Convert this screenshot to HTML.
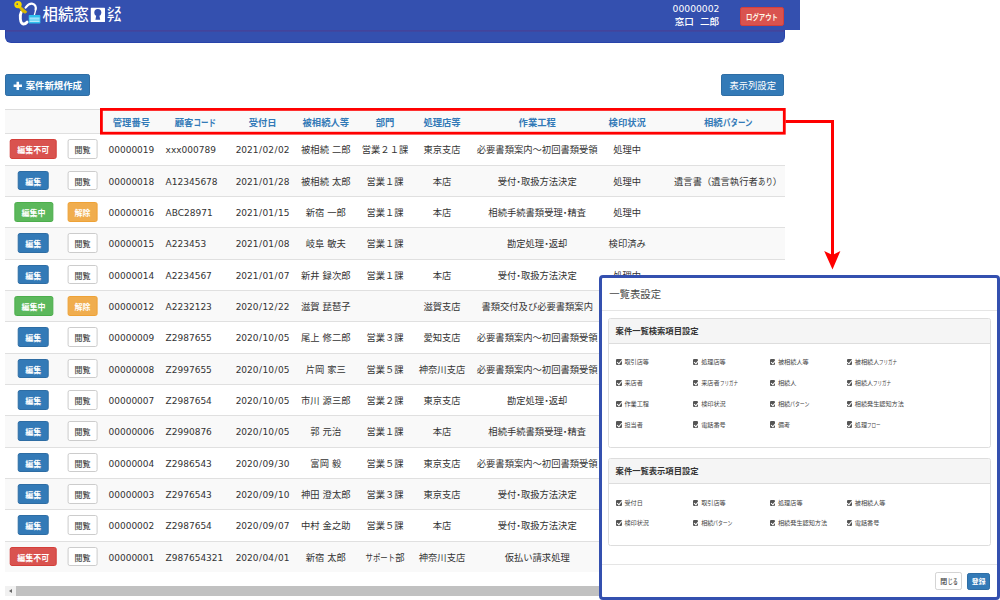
<!DOCTYPE html>
<html lang="ja">
<head>
<meta charset="utf-8">
<title>相続窓口システム</title>
<style>
*{box-sizing:border-box;margin:0;padding:0}
html,body{width:1000px;height:600px;overflow:hidden;background:#fff}
body{position:relative;font-family:"DejaVu Sans","Noto Sans CJK JP",sans-serif;font-size:9.3px;color:#333}
.k{display:inline-block;transform:scaleX(var(--s,.8));transform-origin:0 50%;margin-right:calc(var(--n) * (var(--s,.8) - 1) * 1em);white-space:nowrap}
/* header */
.hd{position:absolute;left:0;top:0;width:800px;height:30.3px;background:#3450af}
.sub{position:absolute;left:5px;top:30px;width:779.5px;height:13px;background:linear-gradient(#3c4aa6 0,#43449c .5px,#43449c 1.3px,#3450af 2px);border-radius:0 0 6px 6px;border:.7px solid #2843aa;border-top:0}
.logo{position:absolute;left:0;top:0}
.brand{position:absolute;left:42.6px;top:4.4px;font-size:15.4px;line-height:22px;color:#fff;font-weight:500;letter-spacing:.1px;white-space:nowrap}
.sys{position:absolute;left:107px;top:6.2px;font-size:7.4px;line-height:7.25px;color:#fff;font-weight:900;white-space:nowrap;transform:scaleY(1.12);transform-origin:0 0;letter-spacing:-.3px}
.user{position:absolute;left:646px;width:100px;text-align:center;color:#fff;white-space:nowrap}
.u1{top:2.7px;font-size:9.2px;line-height:11px}
.u2{top:16px;left:647px;font-size:9.6px;line-height:12px;word-spacing:3px;font-weight:500}
.btn{display:inline-block;font-weight:700;text-align:center;white-space:nowrap;border-radius:2.2px;border:.7px solid transparent;color:#fff}
.logout{position:absolute;left:740.4px;top:6.8px;width:43.4px;height:19.6px;line-height:20px;font-size:8px;background:#d9534f;border-color:#d43f3a;color:#fff7e8}
.new{position:absolute;left:5px;top:73.6px;width:84.6px;height:22.4px;line-height:21px;font-size:9.4px;background:#337ab7;border-color:#2e6da4}
.cols{position:absolute;left:721px;top:73.6px;width:63.4px;height:22.4px;line-height:21px;font-size:9.3px;background:#337ab7;border-color:#2e6da4;font-weight:400}
/* table */
.tbl{position:absolute;left:5px;top:108.5px;width:779.5px;height:463px}
.hr{position:absolute;left:0;top:0;width:100%;height:25.2px;background:#f9f9f9;border-top:.7px solid #ddd;border-bottom:1.3px solid #ddd;line-height:25.5px}
.tr{position:absolute;left:0;width:100%;height:31.33px;border-top:.7px solid #e0e0e0;line-height:31.6px}
.tr.odd{background:#f9f9f9}
.c{position:absolute;top:0;transform:translateX(-50%);white-space:nowrap}
.l{position:absolute;top:0;white-space:nowrap}
.n{font-size:9px;margin-top:1.1px}
.s{font-style:normal;margin:0 .5px}
.th{color:#337ab7;font-weight:700;font-size:9.3px}
.tr .btn{height:19.8px;line-height:21.2px;font-size:8px;vertical-align:middle;position:relative;top:-1.7px}
.bd{width:46.6px;background:#d9534f;border-color:#d43f3a}
.bp{width:30.6px;background:#337ab7;border-color:#2e6da4}
.bs{width:38.8px;margin-left:.5px;background:#5cb85c;border-color:#4cae4c}
.bw{width:30.8px;background:#fff;border-color:#ccc!important;color:#444!important;font-weight:500}
.bo{width:30.8px;background:#f0ad4e;border-color:#eea236}
/* scrollbar */
.sb{position:absolute;left:5px;top:585.8px;width:780px;height:9.8px;background:#f1f1f1}
.sb i{position:absolute;left:11.2px;top:.6px;width:700px;height:9.2px;background:#c1c1c1}
.sb b{position:absolute;left:3.8px;top:2.8px;width:0;height:0;border:2.3px solid transparent;border-left:0;border-right:3px solid #666}
/* modal */
.modal{position:absolute;left:599px;top:275px;width:401px;height:325px;background:#fff;border:3px solid #3450af;border-radius:4px}
.mt{position:absolute;left:7.2px;top:7.6px;font-size:10.4px;line-height:16px;color:#4a4a4a;font-weight:400;white-space:nowrap}
.hl{position:absolute;left:0;width:100%;height:.8px;background:#e5e5e5}
.panel{position:absolute;left:6.4px;width:382.6px;border:.7px solid #ddd;border-radius:2.5px;background:#fff}
.ph{height:25px;line-height:24px;background:#f5f5f5;border-bottom:.7px solid #ddd;font-size:8.3px;font-weight:700;color:#333;padding-left:6.2px;border-radius:2px 2px 0 0}
.pb{position:relative}
.cb{position:absolute;font-size:6.15px;line-height:10px;color:#444;white-space:nowrap;padding-left:8.4px;margin-left:-.8px}
.cb i{position:absolute;left:.2px;top:1.5px;width:5.5px;height:6.5px;background:#555;border-radius:1.1px}
.cb i:after{content:"";position:absolute;left:1.9px;top:.5px;width:1.8px;height:3.9px;border:solid #fff;border-width:0 1px 1px 0;transform:rotate(40deg)}
.mclose{position:absolute;left:333.2px;top:294.3px;width:27.3px;height:18.2px;line-height:18.8px;font-size:6.9px;background:#fff;border-color:#d4d4d4;color:#444;font-weight:500;text-indent:1px}
.mreg{position:absolute;left:365px;top:294.5px;width:23.3px;height:17.8px;line-height:16.6px;font-size:6.8px;background:#337ab7;border-color:#2e6da4}
.ov{position:absolute;left:0;top:0;pointer-events:none}
</style>
</head>
<body>
<div class="hd"></div>
<div class="sub"></div>
<svg class="logo" width="130" height="31" viewBox="0 0 130 31">
  <!-- ring -->
  <path d="M21.3 12 C19.6 15 19.9 23.6 23.2 24 C25 24.1 26.2 23.2 27.2 22" fill="none" stroke="#fff" stroke-width="2.8" stroke-linecap="round"/>
  <path d="M25.6 7.6 C27.6 5 30.4 3.4 32.6 3.8 C35.4 4.4 36.2 7 35.6 9.6" fill="none" stroke="#fff" stroke-width="2.2" stroke-linecap="round"/>
  <path d="M35.6 9.6 C35.4 11.6 35 13 34.4 14.8" fill="none" stroke="#fff" stroke-width="1.3" stroke-linecap="round"/>
  <!-- key -->
  <path d="M20.2 5.9 L27 11.8 L25.7 13.3 L25 12.7 L24.2 13.3 L23.2 12.3 L22.6 12.5 L18.8 7.5Z" fill="#dcbc00" stroke="#dcbc00" stroke-width=".5" stroke-linejoin="round"/>
  <circle cx="18" cy="4.6" r="3.7" fill="#f3d800"/>
  <circle cx="17.2" cy="4.1" r=".85" fill="#3450af"/>
  <!-- card -->
  <rect x="28.7" y="15" width="11.7" height="8.5" rx=".8" fill="#2fc0ee"/>
  <rect x="29.5" y="17.6" width="10.1" height="1.1" fill="#c9f0ff"/>
  <rect x="29.5" y="19.3" width="10.1" height=".9" fill="#9fe3fb"/>
  <rect x="29.5" y="20.7" width="10.1" height="1" fill="#eefbff"/>
  <!-- keyhole box -->
  <rect x="90.8" y="7.8" width="14.2" height="14.2" rx=".6" fill="#fff"/>
  <circle cx="97.8" cy="12.4" r="3.5" fill="#3450af"/>
  <path d="M96.4 14.6 L95.4 19.8 L100.2 19.8 L99.2 14.6Z" fill="#3450af"/>
</svg>
<div class="brand">相続窓</div>
<div class="sys">シス<br>テム</div>
<div class="user u1">00000002</div>
<div class="user u2">窓口 二郎</div>
<b class="btn logout"><span class="k" style="--n:5">ログアウト</span></b>

<b class="btn new"><svg width="9.6" height="9.6" viewBox="0 0 9 9" style="vertical-align:-1.5px;margin-right:3.4px"><path d="M3.3 .6h2.4v2.7h2.7v2.4H5.7v2.7H3.3V5.7H.6V3.3h2.7z" fill="#fff"/></svg>案件新規作成</b>
<span class="btn cols">表示列設定</span>

<div class="tbl">
<div class="hr">
<span class="c th" style="left:126.4px">管理番号</span>
<span class="c th" style="left:190.2px">顧客<span class="k" style="--n:3">コード</span></span>
<span class="c th" style="left:257.6px">受付日</span>
<span class="c th" style="left:320.8px">被相続人等</span>
<span class="c th" style="left:380.0px">部門</span>
<span class="c th" style="left:437.0px">処理店等</span>
<span class="c th" style="left:532.2px">作業工程</span>
<span class="c th" style="left:622.2px">検印状況</span>
<span class="c th" style="left:723.0px">相続<span class="k" style="--n:4">パターン</span></span>
</div>
<div class="tr" style="top:24.90px">
<span class="c" style="left:28.3px"><b class="btn bd">編集不可</b></span>
<span class="c" style="left:77.5px"><b class="btn bw">閲覧</b></span>
<span class="c n" style="left:126.4px">00000019</span>
<span class="l n" style="left:160.6px">xxx000789</span>
<span class="c n" style="left:257.6px">2021<i class="s">/</i>02<i class="s">/</i>02</span>
<span class="c" style="left:320.8px">被相続 二郎</span>
<span class="c" style="left:380.0px">営業２１課</span>
<span class="c" style="left:437.0px">東京支店</span>
<span class="c" style="left:532.2px">必要書類案内～初回書類受領</span>
<span class="c" style="left:622.2px">処理中</span>
</div>
<div class="tr odd" style="top:56.23px">
<span class="c" style="left:28.3px"><b class="btn bp">編集</b></span>
<span class="c" style="left:77.5px"><b class="btn bw">閲覧</b></span>
<span class="c n" style="left:126.4px">00000018</span>
<span class="l n" style="left:160.6px">A12345678</span>
<span class="c n" style="left:257.6px">2021<i class="s">/</i>01<i class="s">/</i>28</span>
<span class="c" style="left:320.8px">被相続 太郎</span>
<span class="c" style="left:380.0px">営業１課</span>
<span class="c" style="left:437.0px">本店</span>
<span class="c" style="left:532.2px">受付<b>･</b>取扱方法決定</span>
<span class="c" style="left:622.2px">処理中</span>
<span class="c" style="left:723.0px">遺言書（遺言執行者<span class="k" style="--n:2">あり</span>）</span>
</div>
<div class="tr" style="top:87.56px">
<span class="c" style="left:28.3px"><b class="btn bs">編集中</b></span>
<span class="c" style="left:77.5px"><b class="btn bo">解除</b></span>
<span class="c n" style="left:126.4px">00000016</span>
<span class="l n" style="left:160.6px">ABC28971</span>
<span class="c n" style="left:257.6px">2021<i class="s">/</i>01<i class="s">/</i>15</span>
<span class="c" style="left:320.8px">新宿 一郎</span>
<span class="c" style="left:380.0px">営業１課</span>
<span class="c" style="left:437.0px">本店</span>
<span class="c" style="left:532.2px">相続手続書類受理<b>･</b>精査</span>
<span class="c" style="left:622.2px">処理中</span>
</div>
<div class="tr odd" style="top:118.89px">
<span class="c" style="left:28.3px"><b class="btn bp">編集</b></span>
<span class="c" style="left:77.5px"><b class="btn bw">閲覧</b></span>
<span class="c n" style="left:126.4px">00000015</span>
<span class="l n" style="left:160.6px">A223453</span>
<span class="c n" style="left:257.6px">2021<i class="s">/</i>01<i class="s">/</i>08</span>
<span class="c" style="left:320.8px">岐阜 敏夫</span>
<span class="c" style="left:380.0px">営業１課</span>
<span class="c" style="left:532.2px">勘定処理<b>･</b>返却</span>
<span class="c" style="left:622.2px">検印済み</span>
</div>
<div class="tr" style="top:150.22px">
<span class="c" style="left:28.3px"><b class="btn bp">編集</b></span>
<span class="c" style="left:77.5px"><b class="btn bw">閲覧</b></span>
<span class="c n" style="left:126.4px">00000014</span>
<span class="l n" style="left:160.6px">A2234567</span>
<span class="c n" style="left:257.6px">2021<i class="s">/</i>01<i class="s">/</i>07</span>
<span class="c" style="left:320.8px">新井 録次郎</span>
<span class="c" style="left:380.0px">営業１課</span>
<span class="c" style="left:437.0px">本店</span>
<span class="c" style="left:532.2px">受付<b>･</b>取扱方法決定</span>
<span class="c" style="left:622.2px">処理中</span>
</div>
<div class="tr odd" style="top:181.55px">
<span class="c" style="left:28.3px"><b class="btn bs">編集中</b></span>
<span class="c" style="left:77.5px"><b class="btn bo">解除</b></span>
<span class="c n" style="left:126.4px">00000012</span>
<span class="l n" style="left:160.6px">A2232123</span>
<span class="c n" style="left:257.6px">2020<i class="s">/</i>12<i class="s">/</i>22</span>
<span class="c" style="left:320.8px">滋賀 琵琶子</span>
<span class="c" style="left:437.0px">滋賀支店</span>
<span class="c" style="left:532.2px">書類交付及び必要書類案内</span>
<span class="c" style="left:622.2px">処理中</span>
</div>
<div class="tr" style="top:212.88px">
<span class="c" style="left:28.3px"><b class="btn bp">編集</b></span>
<span class="c" style="left:77.5px"><b class="btn bw">閲覧</b></span>
<span class="c n" style="left:126.4px">00000009</span>
<span class="l n" style="left:160.6px">Z2987655</span>
<span class="c n" style="left:257.6px">2020<i class="s">/</i>10<i class="s">/</i>05</span>
<span class="c" style="left:320.8px">尾上 修二郎</span>
<span class="c" style="left:380.0px">営業３課</span>
<span class="c" style="left:437.0px">愛知支店</span>
<span class="c" style="left:532.2px">必要書類案内～初回書類受領</span>
<span class="c" style="left:622.2px">処理中</span>
</div>
<div class="tr odd" style="top:244.21px">
<span class="c" style="left:28.3px"><b class="btn bp">編集</b></span>
<span class="c" style="left:77.5px"><b class="btn bw">閲覧</b></span>
<span class="c n" style="left:126.4px">00000008</span>
<span class="l n" style="left:160.6px">Z2997655</span>
<span class="c n" style="left:257.6px">2020<i class="s">/</i>10<i class="s">/</i>05</span>
<span class="c" style="left:320.8px">片岡 家三</span>
<span class="c" style="left:380.0px">営業５課</span>
<span class="c" style="left:437.0px">神奈川支店</span>
<span class="c" style="left:532.2px">必要書類案内～初回書類受領</span>
<span class="c" style="left:622.2px">処理中</span>
</div>
<div class="tr" style="top:275.54px">
<span class="c" style="left:28.3px"><b class="btn bp">編集</b></span>
<span class="c" style="left:77.5px"><b class="btn bw">閲覧</b></span>
<span class="c n" style="left:126.4px">00000007</span>
<span class="l n" style="left:160.6px">Z2987654</span>
<span class="c n" style="left:257.6px">2020<i class="s">/</i>10<i class="s">/</i>05</span>
<span class="c" style="left:320.8px">市川 源三郎</span>
<span class="c" style="left:380.0px">営業２課</span>
<span class="c" style="left:437.0px">東京支店</span>
<span class="c" style="left:532.2px">勘定処理<b>･</b>返却</span>
<span class="c" style="left:622.2px">検印済み</span>
</div>
<div class="tr odd" style="top:306.87px">
<span class="c" style="left:28.3px"><b class="btn bp">編集</b></span>
<span class="c" style="left:77.5px"><b class="btn bw">閲覧</b></span>
<span class="c n" style="left:126.4px">00000006</span>
<span class="l n" style="left:160.6px">Z2990876</span>
<span class="c n" style="left:257.6px">2020<i class="s">/</i>10<i class="s">/</i>05</span>
<span class="c" style="left:320.8px">郭 元治</span>
<span class="c" style="left:380.0px">営業１課</span>
<span class="c" style="left:437.0px">本店</span>
<span class="c" style="left:532.2px">相続手続書類受理<b>･</b>精査</span>
<span class="c" style="left:622.2px">処理中</span>
</div>
<div class="tr" style="top:338.20px">
<span class="c" style="left:28.3px"><b class="btn bp">編集</b></span>
<span class="c" style="left:77.5px"><b class="btn bw">閲覧</b></span>
<span class="c n" style="left:126.4px">00000004</span>
<span class="l n" style="left:160.6px">Z2986543</span>
<span class="c n" style="left:257.6px">2020<i class="s">/</i>09<i class="s">/</i>30</span>
<span class="c" style="left:320.8px">富岡 毅</span>
<span class="c" style="left:380.0px">営業５課</span>
<span class="c" style="left:437.0px">東京支店</span>
<span class="c" style="left:532.2px">必要書類案内～初回書類受領</span>
<span class="c" style="left:622.2px">処理中</span>
</div>
<div class="tr odd" style="top:369.53px">
<span class="c" style="left:28.3px"><b class="btn bp">編集</b></span>
<span class="c" style="left:77.5px"><b class="btn bw">閲覧</b></span>
<span class="c n" style="left:126.4px">00000003</span>
<span class="l n" style="left:160.6px">Z2976543</span>
<span class="c n" style="left:257.6px">2020<i class="s">/</i>09<i class="s">/</i>10</span>
<span class="c" style="left:320.8px">神田 澄太郎</span>
<span class="c" style="left:380.0px">営業３課</span>
<span class="c" style="left:437.0px">東京支店</span>
<span class="c" style="left:532.2px">受付<b>･</b>取扱方法決定</span>
<span class="c" style="left:622.2px">処理中</span>
</div>
<div class="tr" style="top:400.86px">
<span class="c" style="left:28.3px"><b class="btn bp">編集</b></span>
<span class="c" style="left:77.5px"><b class="btn bw">閲覧</b></span>
<span class="c n" style="left:126.4px">00000002</span>
<span class="l n" style="left:160.6px">Z2987654</span>
<span class="c n" style="left:257.6px">2020<i class="s">/</i>09<i class="s">/</i>07</span>
<span class="c" style="left:320.8px">中村 金之助</span>
<span class="c" style="left:380.0px">営業５課</span>
<span class="c" style="left:437.0px">本店</span>
<span class="c" style="left:532.2px">受付<b>･</b>取扱方法決定</span>
<span class="c" style="left:622.2px">処理中</span>
</div>
<div class="tr odd" style="top:432.19px">
<span class="c" style="left:28.3px"><b class="btn bd">編集不可</b></span>
<span class="c" style="left:77.5px"><b class="btn bw">閲覧</b></span>
<span class="c n" style="left:126.4px">00000001</span>
<span class="l n" style="left:160.6px">Z987654321</span>
<span class="c n" style="left:257.6px">2020<i class="s">/</i>04<i class="s">/</i>01</span>
<span class="c" style="left:320.8px">新宿 太郎</span>
<span class="c" style="left:380.0px"><span class="k" style="--n:4">サポート</span>部</span>
<span class="c" style="left:437.0px">神奈川支店</span>
<span class="c" style="left:532.2px">仮払い請求処理</span>
<span class="c" style="left:622.2px">検印済み</span>
</div>
</div>

<div class="sb"><i></i><b></b></div>

<svg class="ov" width="1000" height="600" viewBox="0 0 1000 600">
  <rect x="101.4" y="109.4" width="682.9" height="23.8" fill="none" stroke="#f00" stroke-width="2.8"/>
  <path d="M785.6 121.5 H832.5 V256" fill="none" stroke="#f00" stroke-width="3"/>
  <path d="M832.5 269.6 L824.2 251 L832.5 255 L840.4 251Z" fill="#f00"/>
</svg>

<div class="modal">
  <div class="mt">一覧表設定</div>
  <div class="hl" style="top:32.4px"></div>
  <div class="panel" style="top:40px;height:129.6px">
    <div class="ph">案件一覧検索項目設定</div>
    <div class="pb" style="left:7.4px;top:13.3px"><!--p1-->
<label class="cb" style="left:0.0px;top:0.0px"><i></i>取引店等</label>
<label class="cb" style="left:76.8px;top:0.0px"><i></i>処理店等</label>
<label class="cb" style="left:153.6px;top:0.0px"><i></i>被相続人等</label>
<label class="cb" style="left:230.4px;top:0.0px"><i></i>被相続人<span class="k" style="--n:4;--s:.73">フリガナ</span></label>
<label class="cb" style="left:0.0px;top:20.9px"><i></i>来店者</label>
<label class="cb" style="left:76.8px;top:20.9px"><i></i>来店者<span class="k" style="--n:4;--s:.73">フリガナ</span></label>
<label class="cb" style="left:153.6px;top:20.9px"><i></i>相続人</label>
<label class="cb" style="left:230.4px;top:20.9px"><i></i>相続人<span class="k" style="--n:4;--s:.73">フリガナ</span></label>
<label class="cb" style="left:0.0px;top:41.8px"><i></i>作業工程</label>
<label class="cb" style="left:76.8px;top:41.8px"><i></i>検印状況</label>
<label class="cb" style="left:153.6px;top:41.8px"><i></i>相続<span class="k" style="--n:4">パターン</span></label>
<label class="cb" style="left:230.4px;top:41.8px"><i></i>相続発生認知方法</label>
<label class="cb" style="left:0.0px;top:62.7px"><i></i>担当者</label>
<label class="cb" style="left:76.8px;top:62.7px"><i></i>電話番号</label>
<label class="cb" style="left:153.6px;top:62.7px"><i></i>備考</label>
<label class="cb" style="left:230.4px;top:62.7px"><i></i>処理<span class="k" style="--n:3;--s:.73">フロー</span></label>
    </div>
  </div>
  <div class="panel" style="top:179.8px;height:88.6px">
    <div class="ph">案件一覧表示項目設定</div>
    <div class="pb" style="left:7.4px;top:14.4px">
<label class="cb" style="left:0.0px;top:0.0px"><i></i>受付日</label>
<label class="cb" style="left:76.8px;top:0.0px"><i></i>取引店等</label>
<label class="cb" style="left:153.6px;top:0.0px"><i></i>処理店等</label>
<label class="cb" style="left:230.4px;top:0.0px"><i></i>被相続人等</label>
<label class="cb" style="left:0.0px;top:20.2px"><i></i>検印状況</label>
<label class="cb" style="left:76.8px;top:20.2px"><i></i>相続<span class="k" style="--n:4">パターン</span></label>
<label class="cb" style="left:153.6px;top:20.2px"><i></i>相続発生認知方法</label>
<label class="cb" style="left:230.4px;top:20.2px"><i></i>電話番号</label>
    </div>
  </div>
  <div class="hl" style="top:286px"></div>
  <b class="btn mclose">閉<span class="k" style="--n:2;--s:.73">じる</span></b>
  <b class="btn mreg">登録</b>
</div>
</body>
</html>
